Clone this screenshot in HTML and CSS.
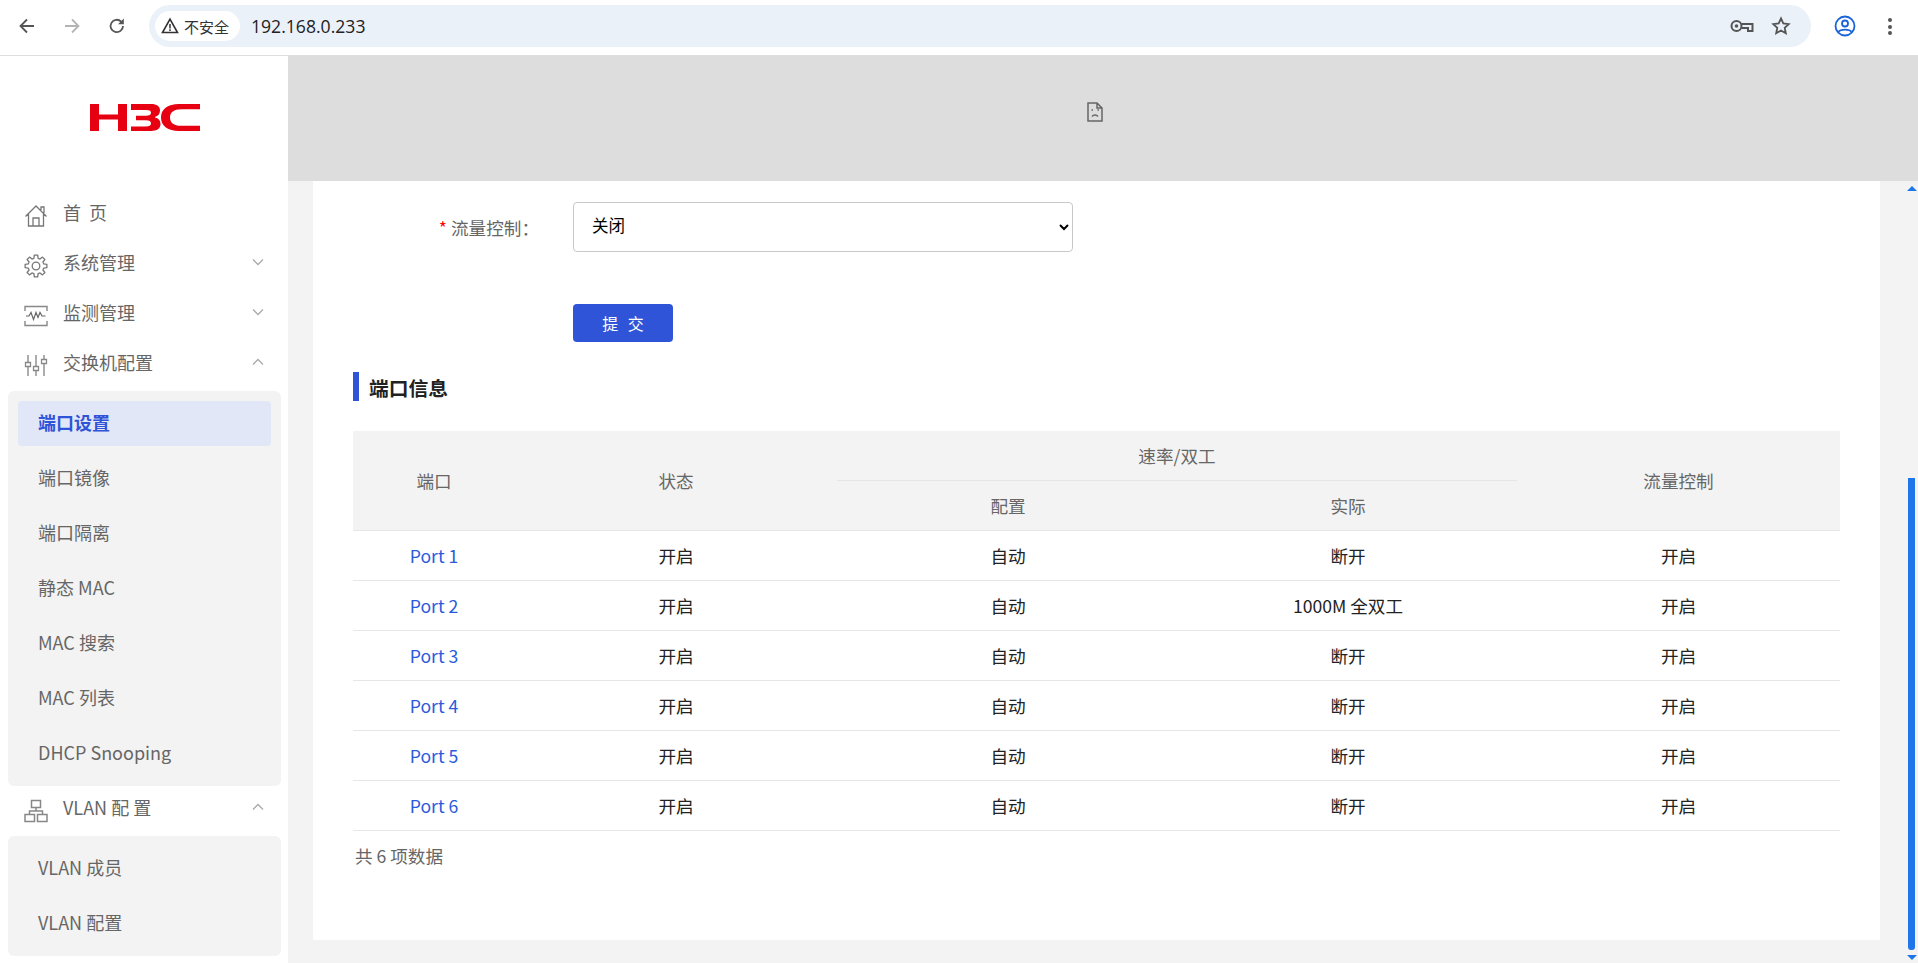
FILE: index.html
```html
<!DOCTYPE html>
<html lang="zh-CN">
<head>
    <meta charset="UTF-8">
    <title>192.168.0.233</title>
    <link rel="stylesheet" href="styles.css">
</head>
<body>
    <!-- browser toolbar -->
    <header class="toolbar">
        <div class="nav-buttons">
            <svg class="tool-icon" viewBox="0 0 20 20"><path d="M17 10H4M10 3.5L3.5 10l6.500 6.500" fill="none" stroke="#555" stroke-width="1.800"/></svg>
            <svg class="tool-icon" viewBox="0 0 20 20"><path d="M3 10h13M10 3.500l6.500 6.500-6.500 6.500" fill="none" stroke="#b4b4b4" stroke-width="1.800"/></svg>
            <svg class="tool-icon" viewBox="0 0 20 20"><path d="M16 10a6.200 6.200 0 1 1-1.800-4.400" fill="none" stroke="#555" stroke-width="1.800"/><path d="M16.800 2.500v5.800H11z" fill="#555"/></svg>
        </div>
        <div class="omnibox">
            <div class="security-chip">
                <svg class="warn-icon" viewBox="0 0 18 18"><path d="M9 2.200L16.500 15.500H1.500z" fill="none" stroke="#333" stroke-width="1.600"/><path d="M9 7v4.500M9 12.300v1.600" stroke="#333" stroke-width="1.500"/></svg>
                <span>不安全</span>
            </div>
            <span class="url">192.168.0.233</span>
            <svg class="key-icon" viewBox="0 0 24 14"><circle cx="6.500" cy="7" r="5" fill="none" stroke="#555" stroke-width="2"/><circle cx="6.500" cy="7" r="1.800" fill="#555"/><path d="M11.500 5H22.500V12H18V9H11.500" fill="none" stroke="#555" stroke-width="2"/></svg>
            <svg class="star-icon" viewBox="0 0 20 20"><path d="M10 2.500l2.300 5 5.400.6-4 3.700 1.100 5.400L10 14.500l-4.800 2.700 1.100-5.400-4-3.700 5.400-.6z" fill="none" stroke="#555" stroke-width="1.800"/></svg>
        </div>
        <svg class="profile-icon" viewBox="0 0 22 22"><circle cx="11" cy="11" r="9.500" fill="none" stroke="#1a63d8" stroke-width="1.800"/><circle cx="11" cy="8.500" r="3" fill="none" stroke="#1a63d8" stroke-width="1.800"/><path d="M4.500 17c2-3.200 11-3.200 13 0" fill="none" stroke="#1a63d8" stroke-width="1.800"/></svg>
        <div class="dots"><i></i><i></i><i></i></div>
    </header>

    <div class="app">
        <aside class="sidebar">
            <div class="logo-box">
                <svg class="logo" viewBox="0 0 111 27" aria-label="H3C">
                    <path fill="#e60012" d="M1 0h9v10.500h19V0h9v27h-9V15.500H10V27H1z"/>
                    <path fill="#e60012" d="M42 0h20c6 0 9 2.500 9 6.500 0 3.500-2 5.500-5 6.500v.6c3.500.8 5.500 3 5.500 6.500 0 4.500-3.500 6.900-9.500 6.900H42v-4.600h15c3 0 5-.8 5-3.100 0-2.100-1.700-3-5-3H47v-4.500h10c3 0 5-.8 5-3 0-2.100-1.700-2.800-5-2.800H42z"/>
                    <path fill="#e60012" d="M111 5.200H92c-7 0-11 3-11 8.300s4 8.300 11 8.300h19V27H90c-11 0-18-5-18-13.500S79 0 90 0h21z"/>
                </svg>
            </div>
            <nav class="menu">
                <a class="menu-head">
                    <svg class="menu-icon" viewBox="0 0 24 24"><path d="M1.500 12.500L12 2l10.500 10.500M4.500 10v12h15V10M9 22v-8h6v8M17 6V3h3v6" fill="none" stroke="#777" stroke-width="1.300"/></svg>
                    <span>首&nbsp;&nbsp;页</span>
                </a>
                <a class="menu-head">
                    <svg class="menu-icon" viewBox="0 0 24 24">
                        <defs><path id="gear-tooth" d="M8.940 4.610L9.930 4.270 10.280 1.140H13.720L14.070 4.270 15.060 4.610" fill="none" stroke="#777" stroke-width="1.300" stroke-linejoin="round"/></defs>
                        <use href="#gear-tooth"/>
                        <use href="#gear-tooth" transform="rotate(45 12 12)"/>
                        <use href="#gear-tooth" transform="rotate(90 12 12)"/>
                        <use href="#gear-tooth" transform="rotate(135 12 12)"/>
                        <use href="#gear-tooth" transform="rotate(180 12 12)"/>
                        <use href="#gear-tooth" transform="rotate(225 12 12)"/>
                        <use href="#gear-tooth" transform="rotate(270 12 12)"/>
                        <use href="#gear-tooth" transform="rotate(315 12 12)"/>
                        <circle cx="12" cy="12" r="3.800" fill="none" stroke="#777" stroke-width="1.300"/>
                    </svg>
                    <span>系统管理</span>
                    <svg class="chevron" viewBox="0 0 12 8"><path d="M1 1.500l5 5 5-5" fill="none" stroke="#aaa" stroke-width="1.300"/></svg>
                </a>
                <a class="menu-head">
                    <svg class="menu-icon" viewBox="0 0 24 24"><path d="M1 7V2.500h22V7M1 17v4.500h22V17" fill="none" stroke="#888" stroke-width="1.400"/><path d="M2 12h3l2-3.500 2.500 7 2.500-7 2 5 2-5 2 3.500h3.500" fill="none" stroke="#666" stroke-width="1.200"/></svg>
                    <span>监测管理</span>
                    <svg class="chevron" viewBox="0 0 12 8"><path d="M1 1.500l5 5 5-5" fill="none" stroke="#aaa" stroke-width="1.300"/></svg>
                </a>
                <a class="menu-head">
                    <svg class="menu-icon" viewBox="0 0 24 24"><path d="M4 1v21M12 1v21M20 1v21" stroke="#999" stroke-width="1.600"/><path d="M1.500 8.500h5v4h-5zM9.500 12.500h5v4h-5zM17.500 5.500h5v4h-5z" fill="#fff" stroke="#888" stroke-width="1.300"/></svg>
                    <span>交换机配置</span>
                    <svg class="chevron" viewBox="0 0 12 8"><path d="M1 6.500l5-5 5 5" fill="none" stroke="#aaa" stroke-width="1.300"/></svg>
                </a>
                <div class="submenu">
                    <a class="sub-item active">端口设置</a>
                    <a class="sub-item">端口镜像</a>
                    <a class="sub-item">端口隔离</a>
                    <a class="sub-item">静态 MAC</a>
                    <a class="sub-item">MAC 搜索</a>
                    <a class="sub-item">MAC 列表</a>
                    <a class="sub-item">DHCP Snooping</a>
                </div>
                <a class="menu-head">
                    <svg class="menu-icon" viewBox="0 0 24 24"><path d="M7.500 1.500h9v7h-9zM1 15.500h9.500v7H1zM13.500 15.500H23v7h-9.500zM12 8.500v3.500M5.500 15.500V12h13v3.500" fill="none" stroke="#888" stroke-width="1.500"/></svg>
                    <span>VLAN 配 置</span>
                    <svg class="chevron" viewBox="0 0 12 8"><path d="M1 6.500l5-5 5 5" fill="none" stroke="#aaa" stroke-width="1.300"/></svg>
                </a>
                <div class="submenu">
                    <a class="sub-item">VLAN 成员</a>
                    <a class="sub-item">VLAN 配置</a>
                </div>
            </nav>
        </aside>

        <main class="main">
            <div class="banner">
                <svg class="broken-img" viewBox="0 0 16 20"><path d="M1 1h9l5 5v13H1zM10 1v5h5" fill="none" stroke="#666" stroke-width="1.500"/><path d="M4.500 8h1.500M10.500 8h1.500M5 14.500c1.500-2 4.500-2 6 0" fill="none" stroke="#666" stroke-width="1.300"/></svg>
            </div>
            <div class="scroll-area">
                <div class="page-body">
                    <section class="card">
                        <div class="form-row">
                            <label class="form-label"><em>*</em> 流量控制：</label>
                            <select class="form-select"><option>关闭</option></select>
                        </div>
                        <div class="form-actions">
                            <button class="submit-button">提 交</button>
                        </div>
                        <h2 class="section-title">端口信息</h2>
                        <table class="port-table">
                            <colgroup>
                                <col class="col-port"><col class="col-state"><col class="col-conf"><col class="col-real"><col class="col-flow">
                            </colgroup>
                            <thead>
                                <tr class="head-top">
                                    <th rowspan="2">端口</th>
                                    <th rowspan="2">状态</th>
                                    <th colspan="2" class="group-head">速率/双工</th>
                                    <th rowspan="2">流量控制</th>
                                </tr>
                                <tr>
                                    <th>配置</th>
                                    <th>实际</th>
                                </tr>
                            </thead>
                            <tbody>
                                <tr><td><a class="port-link">Port 1</a></td><td>开启</td><td>自动</td><td>断开</td><td>开启</td></tr>
                                <tr><td><a class="port-link">Port 2</a></td><td>开启</td><td>自动</td><td>1000M 全双工</td><td>开启</td></tr>
                                <tr><td><a class="port-link">Port 3</a></td><td>开启</td><td>自动</td><td>断开</td><td>开启</td></tr>
                                <tr><td><a class="port-link">Port 4</a></td><td>开启</td><td>自动</td><td>断开</td><td>开启</td></tr>
                                <tr><td><a class="port-link">Port 5</a></td><td>开启</td><td>自动</td><td>断开</td><td>开启</td></tr>
                                <tr><td><a class="port-link">Port 6</a></td><td>开启</td><td>自动</td><td>断开</td><td>开启</td></tr>
                            </tbody>
                        </table>
                        <p class="table-total">共 6 项数据</p>
                    </section>
                </div>
                <div class="scrollbar">
                    <span class="arrow-up"></span>
                    <span class="thumb"></span>
                    <span class="arrow-down"></span>
                </div>
            </div>
        </main>
    </div>
</body>
</html>
```

FILE: styles.css
```css
/* base */
* {
    box-sizing: border-box;
}

html, body {
    height: 100%;
}

body {
    margin: 0;
    display: flex;
    flex-direction: column;
    overflow: hidden;
    background: #fff;
    font-family: "Noto Sans CJK SC", "Noto Sans", sans-serif;
    font-size: 17.600px;
    color: #666;
}

/* browser toolbar */
.toolbar {
    height: 56px;
    flex: none;
    display: flex;
    align-items: flex-start;
    padding-top: 5px;
    background: #fff;
    border-bottom: 1px solid #dedede;
}

.nav-buttons {
    width: 149px;
    height: 42px;
    flex: none;
    display: flex;
    align-items: center;
    padding-left: 17px;
    gap: 25px;
}

.tool-icon {
    width: 20px;
    height: 20px;
}

.omnibox {
    width: 1662px;
    height: 42px;
    flex: none;
    display: flex;
    align-items: center;
    padding: 0 6px;
    background: #ebf1f9;
    border-radius: 21px;
}

.security-chip {
    width: 85px;
    height: 30px;
    flex: none;
    display: flex;
    align-items: center;
    gap: 5px;
    padding-left: 6px;
    background: #fff;
    border-radius: 15px;
    font-size: 15px;
    color: #333;
}

.warn-icon {
    width: 18px;
    height: 18px;
}

.url {
    margin-left: 11px;
    font-family: "Open Sans", sans-serif;
    font-size: 17.600px;
    color: #222;
}

.key-icon {
    width: 24px;
    height: 14px;
    margin-left: auto;
}

.star-icon {
    width: 20px;
    height: 20px;
    margin-left: 17px;
    margin-right: 14px;
}

.profile-icon {
    width: 22px;
    height: 22px;
    margin: 10px 0 0 23px;
}

.dots {
    display: flex;
    flex-direction: column;
    gap: 2.500px;
    margin: 13px 0 0 32px;
}

.dots i {
    width: 4px;
    height: 4px;
    border-radius: 50%;
    background: #555;
}

.app {
    flex: 1;
    display: flex;
    min-height: 0;
}

/* sidebar */
.sidebar {
    width: 288px;
    flex: none;
    background: #fff;
    font-size: 18px;
}

.logo-box {
    height: 135px;
    display: flex;
    justify-content: center;
    padding-top: 48px;
}

.logo {
    width: 111px;
    height: 27px;
}

.menu {
    display: flex;
    flex-direction: column;
}

.menu-head {
    height: 50px;
    display: flex;
    align-items: center;
    padding: 0 24px 8px 24px;
}

.menu-icon {
    width: 24px;
    height: 24px;
    margin-right: 15px;
    margin-top: 7px;
}

.chevron {
    width: 12px;
    height: 8px;
    margin-left: auto;
}

.submenu {
    margin: 0 7px 0 8px;
    padding: 10px 10px 0;
    background: #f3f3f3;
    border-radius: 6px;
}

.sub-item {
    height: 45px;
    display: flex;
    align-items: center;
    margin-bottom: 10px;
    padding: 0 0 3px 20px;
    border-radius: 4px;
}

.sub-item.active {
    background: #e2e7f7;
    color: #2f54d8;
    font-weight: 700;
}

/* main area */
.main {
    flex: 1;
    display: flex;
    flex-direction: column;
    min-width: 0;
    background: #f3f3f3;
}

.banner {
    height: 125px;
    flex: none;
    display: flex;
    justify-content: center;
    padding: 46px 16px 0 0;
    background: #dddddd;
}

.broken-img {
    width: 16px;
    height: 20px;
}

.scroll-area {
    flex: 1;
    display: flex;
    min-height: 0;
}

.page-body {
    flex: 1;
    padding: 0 0 23px 25px;
    margin-right: 25px;
}

.card {
    height: 100%;
    padding: 21px 40px 0;
    background: #fff;
}

.form-row {
    display: flex;
    align-items: center;
}

.form-label {
    width: 220px;
    padding-right: 34px;
    text-align: right;
}

.form-label em {
    color: #f00;
    font-style: normal;
}

.form-select {
    width: 500px;
    height: 50px;
    padding: 0 14px 4px;
    border: 1px solid #c9c9c9;
    border-radius: 4px;
    background: #fff;
    font-family: inherit;
    font-size: 16.500px;
    color: #000;
}

.form-actions {
    margin: 52px 0 30px 220px;
}

.submit-button {
    display: block;
    width: 100px;
    height: 38px;
    padding: 0;
    border: none;
    border-radius: 4px;
    background: #2f54d8;
    color: #fff;
    font-family: inherit;
    font-size: 16px;
    word-spacing: 6px;
}

.section-title {
    height: 29px;
    margin: 0 0 30px;
    padding-left: 10px;
    border-left: 6px solid #2f54d8;
    font-size: 19.800px;
    line-height: 31px;
    color: #222;
}

/* port table */
.port-table {
    width: 100%;
    table-layout: fixed;
    border-collapse: collapse;
}

.col-port { width: 162px; }
.col-state { width: 322px; }
.col-conf { width: 342px; }
.col-real { width: 338px; }
.col-flow { width: 323px; }

.port-table th {
    height: 50px;
    padding: 0;
    background: #f3f3f3;
    font-weight: 400;
    color: #666;
}

.port-table .head-top th {
    height: 49px;
}

.port-table .group-head {
    border-bottom: 1px solid #e6e6e6;
}

.port-table thead tr:last-child th,
.port-table th[rowspan] {
    border-bottom: 1px solid #e6e6e6;
}

.port-table td {
    height: 50px;
    padding: 0;
    border-bottom: 1px solid #e6e6e6;
    text-align: center;
    color: #222;
}

.port-link {
    color: #2a5bdc;
}

.table-total {
    margin: 11px 0 0 2px;
    line-height: 27px;
}

/* fake scrollbar */
.scrollbar {
    width: 13px;
    flex: none;
    display: flex;
    flex-direction: column;
    align-items: center;
    padding: 5px 0 3px;
}

.arrow-up,
.arrow-down {
    width: 0;
    height: 0;
    border-left: 5px solid transparent;
    border-right: 5px solid transparent;
}

.arrow-up {
    border-bottom: 5px solid #1f76e8;
}

.arrow-down {
    margin-top: 5px;
    border-top: 5px solid #1f76e8;
}

.thumb {
    width: 7px;
    height: 472px;
    margin-top: auto;
    background: #1f76e8;
    border-radius: 0 0 3px 3px;
}
```
